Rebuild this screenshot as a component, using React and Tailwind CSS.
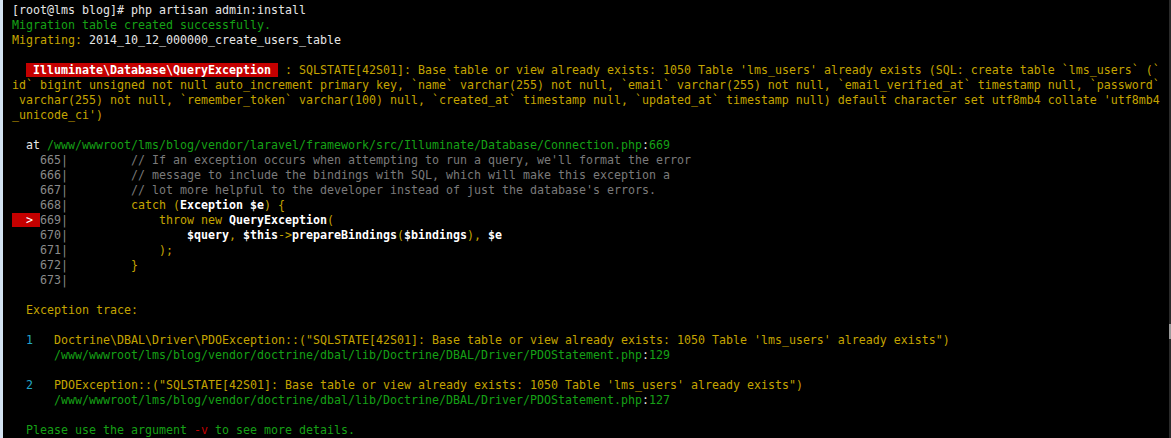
import React from 'react';

const Y = ({ children }) => <span className="text-[#c4a400]">{children}</span>;
const G = ({ children }) => <span className="text-[#16a016]">{children}</span>;
const W = ({ children }) => <span className="text-[#e6e6e6]">{children}</span>;
const B = ({ children }) => <span className="font-bold text-white">{children}</span>;
const N = ({ children }) => <span className="text-[#8a8a8a]">{children}</span>;
const C = ({ children }) => <span className="text-[#7a7a7a]">{children}</span>;

const Line = ({ children }) => (
  <div className="h-[15px] leading-[15px] whitespace-pre">{children || ' '}</div>
);

export default function App() {
  return (
    <div className="relative flex w-[1171px] h-[438px] bg-black overflow-hidden">
      <div className="w-[3px] shrink-0 bg-[#d3e2f1]" />
      <div
        className="flex-1 pl-[9px] pt-[3px] text-[11.63px] text-[#e6e6e6]"
        style={{ fontFamily: '"DejaVu Sans Mono", "Liberation Mono", monospace' }}
      >
        <Line><W>[root@lms blog]# php artisan admin:install</W></Line>
        <Line><G>Migration table created successfully.</G></Line>
        <Line><Y>Migrating:</Y><W> 2014_10_12_000000_create_users_table</W></Line>
        <Line />
        <Line>
          {'  '}
          <span className="bg-[#c40000] font-bold text-white">{' Illuminate\\Database\\QueryException '}</span>
          <Y>{" : SQLSTATE[42S01]: Base table or view already exists: 1050 Table 'lms_users' already exists (SQL: create table `lms_users` (`"}</Y>
        </Line>
        <Line><Y>{'id` bigint unsigned not null auto_increment primary key, `name` varchar(255) not null, `email` varchar(255) not null, `email_verified_at` timestamp null, `password`'}</Y></Line>
        <Line><Y>{" varchar(255) not null, `remember_token` varchar(100) null, `created_at` timestamp null, `updated_at` timestamp null) default character set utf8mb4 collate 'utf8mb4"}</Y></Line>
        <Line><Y>{"_unicode_ci')"}</Y></Line>
        <Line />
        <Line>
          {'  '}<W>at</W> <G>/www/wwwroot/lms/blog/vendor/laravel/framework/src/Illuminate/Database/Connection.php</G><W>:</W><G>669</G>
        </Line>
        <Line><N>{'    665|'}</N><C>{"         // If an exception occurs when attempting to run a query, we'll format the error"}</C></Line>
        <Line><N>{'    666|'}</N><C>{'         // message to include the bindings with SQL, which will make this exception a'}</C></Line>
        <Line><N>{'    667|'}</N><C>{"         // lot more helpful to the developer instead of just the database's errors."}</C></Line>
        <Line><N>{'    668|'}</N>{'         '}<Y>catch (</Y><B>Exception $e</B><Y>) {'{'}</Y></Line>
        <Line>
          <span className="bg-[#c40000] text-white">{'  > '}</span><N>669|</N>{'             '}<Y>throw new </Y><B>QueryException</B><Y>(</Y>
        </Line>
        <Line>
          <N>{'    670|'}</N>{'                 '}<B>$query</B><Y>, </Y><B>$this</B><Y>-&gt;</Y><B>prepareBindings</B><Y>(</Y><B>$bindings</B><Y>), </Y><B>$e</B>
        </Line>
        <Line><N>{'    671|'}</N>{'             '}<Y>);</Y></Line>
        <Line><N>{'    672|'}</N>{'         '}<Y>{'}'}</Y></Line>
        <Line><N>{'    673|'}</N></Line>
        <Line />
        <Line>{'  '}<Y>Exception trace:</Y></Line>
        <Line />
        <Line>
          {'  '}<span className="text-[#22a6c8]">1</span>{'   '}
          <Y>{'Doctrine\\DBAL\\Driver\\PDOException::("SQLSTATE[42S01]: Base table or view already exists: 1050 Table \'lms_users\' already exists")'}</Y>
        </Line>
        <Line>{'      '}<G>/www/wwwroot/lms/blog/vendor/doctrine/dbal/lib/Doctrine/DBAL/Driver/PDOStatement.php</G><W>:</W><G>129</G></Line>
        <Line />
        <Line>
          {'  '}<span className="text-[#22a6c8]">2</span>{'   '}
          <Y>{'PDOException::("SQLSTATE[42S01]: Base table or view already exists: 1050 Table \'lms_users\' already exists")'}</Y>
        </Line>
        <Line>{'      '}<G>/www/wwwroot/lms/blog/vendor/doctrine/dbal/lib/Doctrine/DBAL/Driver/PDOStatement.php</G><W>:</W><G>127</G></Line>
        <Line />
        <Line>{'  '}<G>Please use the argument </G><span className="text-[#c40000]">-v</span><G> to see more details.</G></Line>
      </div>
      <div className="w-[2px] shrink-0 bg-[#2a2a2a]" />
      <div className="absolute right-0 top-[324px] w-[2px] h-[15px] bg-[#9a9a9a]" />
    </div>
  );
}
